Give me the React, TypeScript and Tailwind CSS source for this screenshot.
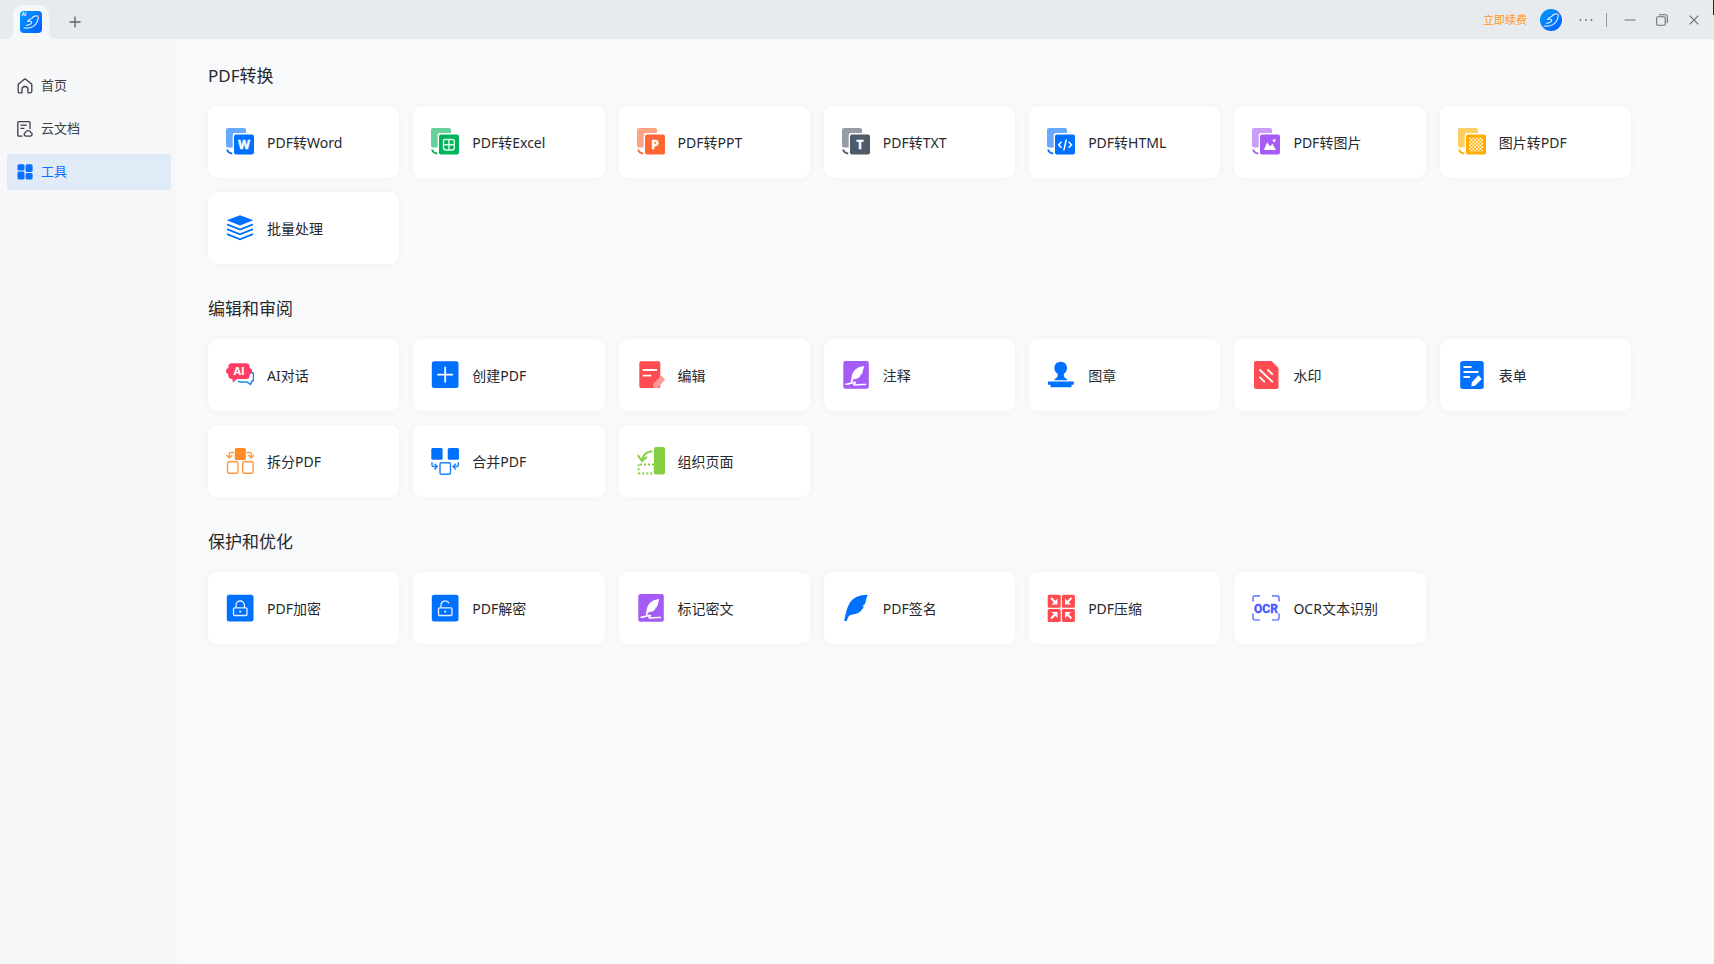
import type { ReactNode } from 'react';

interface Tool {
  label: string;
  icon: ReactNode;
}

interface Section {
  title: string;
  tools: Tool[];
}

const Icon = ({ children }: { children: ReactNode }) => (
  <svg
    className="h-7 w-7 shrink-0"
    viewBox="0 0 28 28"
    fill="none"
    aria-hidden="true"
  >
    {children}
  </svg>
);

// Two overlapping sheets, used by every conversion tool
const ConvertIcon = ({
  front,
  back,
  children,
}: {
  front: string;
  back: string;
  children: ReactNode;
}) => (
  <Icon>
    <path
      d="M2 0H18Q20 0 20 2V5H9Q6.7 5 6.7 7.3V19.5H2Q0 19.5 0 17.5V2Q0 0 2 0Z"
      fill={back}
    />
    <rect x="8" y="6.5" width="20" height="20" rx="2" fill={front} />
    <path d="M1.2 21.5q.4 3.4 5 4" stroke={front} strokeWidth="2" />
    {children}
  </Icon>
);

const Letter = ({ children }: { children: string }) => (
  <text
    x="18"
    y="21"
    textAnchor="middle"
    fill="#fff"
    stroke="#fff"
    strokeWidth=".5"
    className="font-['Open_Sans',sans-serif] text-[12px] font-bold"
  >
    {children}
  </text>
);

const BirdMark = () => (
  <>
    <path
      d="M4 17C10 17.6 15 15.5 17 11.3 17.9 9.3 18.3 7.3 18.6 5.2 15.6 4.500 12.900 5.300 11.800 7.400M11.800 7.400C10 8.600 8.200 8.800 7.600 10.400M7.600 10.400c3-.8 5 .1 3.700 2S8.300 14 6.300 14.300"
      stroke="#d9ecff"
      strokeWidth="1.1"
      strokeLinecap="round"
      strokeLinejoin="round"
      fill="none"
    />
    <circle cx="18.7" cy="5" r=".8" fill="#ff4466" />
  </>
);

const QuillSheet = () => (
  <Icon>
    <rect x="1.3" y="0" width="25.5" height="27.7" rx="2" fill="#a55bf5" />
    <path
      d="M22.5 5C17 5.3 12.500 8 10.500 12.500 9.500 15 9.300 18 8.700 21.500l1.500-.2c.6-2 1-2.800 2-3.200 3.300-.4 5.500-1.600 6.600-3.600l-1-.3 2.200-1.200c1-2.400 1.300-5.600 2.500-8.200Z"
      fill="#fff"
    />
    <path
      d="M4 23.2c4-.2 7.500-2.200 9-1.900s-1.800 1.700-1 2.500c1.400.9 6-.8 11.500-.3"
      stroke="#fff"
      strokeWidth="1.5"
      strokeLinecap="round"
    />
  </Icon>
);

const LockSheet = ({ open = false }: { open?: boolean }) => (
  <Icon>
    <rect x=".8" y=".8" width="26.7" height="26.7" rx="2.5" fill="#0070ff" />
    <rect
      x="7.5"
      y="13.8"
      width="13.5"
      height="7.7"
      rx="1"
      stroke="#e3f0ff"
      strokeWidth="1.3"
    />
    <path
      d={
        open
          ? 'M10 13.8V11.2a4.2 4.2 0 0 1 8-1.8'
          : 'M10 13.8V11.2a4.2 4.2 0 0 1 8.4 0v2.6'
      }
      stroke="#e3f0ff"
      strokeWidth="1.3"
    />
    <circle cx="14.2" cy="17.6" r="1.1" fill="#e3f0ff" />
  </Icon>
);

const SECTIONS: Section[] = [
  {
    title: 'PDF转换',
    tools: [
      {
        label: 'PDF转Word',
        icon: (
          <ConvertIcon front="#0070ff" back="#66a9ff">
            <Letter>W</Letter>
          </ConvertIcon>
        ),
      },
      {
        label: 'PDF转Excel',
        icon: (
          <ConvertIcon front="#00b459" back="#66d29b">
            <path
              d="M13.5 11.5H21.3Q23.3 11.5 23.3 13.5V19.5Q23.3 22 21 22H15Q12.5 22 12.5 19.5V12.5Q12.5 11.5 13.5 11.5ZM12.5 16.8H23.3M17.9 11.5V22"
              stroke="#dffbeb"
              strokeWidth="1.4"
            />
          </ConvertIcon>
        ),
      },
      {
        label: 'PDF转PPT',
        icon: (
          <ConvertIcon front="#ff6633" back="#ffa385">
            <Letter>P</Letter>
          </ConvertIcon>
        ),
      },
      {
        label: 'PDF转TXT',
        icon: (
          <ConvertIcon front="#505a69" back="#969ca5">
            <Letter>T</Letter>
          </ConvertIcon>
        ),
      },
      {
        label: 'PDF转HTML',
        icon: (
          <ConvertIcon front="#0070ff" back="#66a9ff">
            <path
              d="M14.5 13.8 11.7 16.8l2.8 3M21.7 13.8l2.8 3-2.8 3M19.3 11.5l-2.5 10.8"
              stroke="#fff"
              strokeWidth="1.5"
            />
          </ConvertIcon>
        ),
      },
      {
        label: 'PDF转图片',
        icon: (
          <ConvertIcon front="#a55bf5" back="#c99df9">
            <path d="M11.8 22 15.2 14.2 18 18.5l2.4-2.7L24 22Z" fill="#fff" />
            <circle cx="22.2" cy="12.6" r="1.4" fill="#fff" />
          </ConvertIcon>
        ),
      },
      {
        label: '图片转PDF',
        icon: (
          <ConvertIcon front="#ffab00" back="#ffcd66">
            <defs>
              <pattern
                id="checker"
                x="11"
                y="9.5"
                width="3.5"
                height="3.5"
                patternUnits="userSpaceOnUse"
              >
                <path
                  d="M0 0h1.8v1.8H0zM1.75 1.75h1.8v1.8h-1.8z"
                  fill="#fff3d6"
                />
              </pattern>
            </defs>
            <rect x="11" y="9.5" width="14" height="14" fill="url(#checker)" />
          </ConvertIcon>
        ),
      },
      {
        label: '批量处理',
        icon: (
          <Icon>
            <path d="M14 1.2 27.3 6.3 14 11.5.8 6.3Z" fill="#0070ff" />
            <path
              d="M1 10.3l13 5.2 13-5.2M1 15.2l13 5.2 13-5.2M1 20.1l13 5.2 13-5.2"
              stroke="#0070ff"
              strokeWidth="1.8"
            />
          </Icon>
        ),
      },
    ],
  },
  {
    title: '编辑和审阅',
    tools: [
      {
        label: 'AI对话',
        icon: (
          <Icon>
            <path
              d="M25.5 11.5q2 .3 2 2.2v4.5q0 2-1.7 2.1l-1.3 3-3.7-2.4H14.5q-2 0-2-1.4"
              stroke="#1a86f5"
              strokeWidth="1.5"
            />
            <path
              d="M6 2.3H20Q23.7 2.3 23.7 6V7.2Q26.3 7.5 26.3 10.2T23.7 13.2V14.5Q23.7 18 20 18H11L7 21.7 6.3 18Q2.3 18 2.3 14.5V13.2Q0 13 0 10.2T2.3 7.2V6Q2.3 2.3 6 2.3Z"
              fill="#ff3d64"
            />
            <text
              x="13"
              y="14"
              textAnchor="middle"
              fill="#fff"
              className="font-['Open_Sans',sans-serif] text-[11px] font-bold"
            >
              AI
            </text>
          </Icon>
        ),
      },
      {
        label: '创建PDF',
        icon: (
          <Icon>
            <rect x=".8" y=".3" width="26.7" height="26.7" rx="2.5" fill="#0070ff" />
            <path
              d="M14.2 6.5v14.3M7 13.7h14.3"
              stroke="#fff"
              strokeWidth="1.8"
              strokeLinecap="round"
            />
          </Icon>
        ),
      },
      {
        label: '编辑',
        icon: (
          <Icon>
            <rect x="2.3" y=".3" width="21" height="26.7" rx="1.8" fill="#ff4c50" />
            <path d="M5.7 9h14.3M5.7 14.7h8.6" stroke="#fff" strokeWidth="1.8" />
            <path
              d="M23.5 15.3q.8-.8 1.6 0l2.4 2.4q.8.8 0 1.600L20.500 27h-4l-.2-4Z"
              fill="#ff999a"
            />
          </Icon>
        ),
      },
      { label: '注释', icon: <QuillSheet /> },
      {
        label: '图章',
        icon: (
          <Icon>
            <path
              d="M13.7.7C17.5.7 20 3.6 20 7c0 2.7-1.3 4.6-3.2 6 0 3 .7 4.2 3.2 5v1.3H7.5V18c2.5-.8 3.2-2 3.2-5C8.8 11.6 7.4 9.7 7.4 7c0-3.4 2.5-6.3 6.3-6.3Z"
              fill="#0070ff"
            />
            <path d="M1 20.5h25.8v3.2H24.5v2.6H3.5v-2.6H1Z" fill="#0070ff" />
          </Icon>
        ),
      },
      {
        label: '水印',
        icon: (
          <Icon>
            <path
              d="M4 0H19.500L26.500 7V25.500Q26.500 28 24 28H4Q2 28 2 25.500V2Q2 0 4 0Z"
              fill="#ff4c50"
            />
            <path
              d="m7.5 8.5 13.3 12.7M15.5 8.5l5.3 5.2M7.5 15.8l5.3 5.4"
              stroke="#fff"
              strokeWidth="1.8"
            />
          </Icon>
        ),
      },
      {
        label: '表单',
        icon: (
          <Icon>
            <rect x="2.2" y="0" width="23.5" height="28" rx="2.5" fill="#0070ff" />
            <path
              d="M5.5 6h8M5.5 11h15M5.5 16h6.5"
              stroke="#fff"
              strokeWidth="1.8"
            />
            <path d="m20.3 14.3 3.5 3.7-6.5 6.5-4 1 .7-4.3Z" fill="#fff" />
          </Icon>
        ),
      },
      {
        label: '拆分PDF',
        icon: (
          <Icon>
            <rect x="8.8" y="1" width="11" height="12" rx="1.5" fill="#ff8c26" />
            <g stroke="#ff9a40" strokeWidth="1.4">
              <rect x="1.5" y="14.8" width="10.5" height="11.5" rx="1.5" />
              <rect x="16.7" y="14.8" width="10.5" height="11.5" rx="1.5" />
              <path d="M8 5.5H4.5Q3.3 5.5 3.3 7v4M.5 8l2.800 3 3-3M20.500 5.500H24q1.200 0 1.200 1.500v4M22.300 8l2.900 3 2.700-3" />
            </g>
          </Icon>
        ),
      },
      {
        label: '合并PDF',
        icon: (
          <Icon>
            <rect x=".3" y="1" width="11.3" height="11.8" rx="1.5" fill="#0070ff" />
            <rect x="16.7" y="1" width="11.3" height="11.8" rx="1.5" fill="#0070ff" />
            <g stroke="#1a80ff" strokeWidth="1.4">
              <rect x="9" y="15.8" width="10.5" height="11.5" rx="1.5" />
              <path d="M1 15v3q0 1.5 1.5 1.5H6M3.5 16.8l2.7 2.7-2.7 2.9M27.3 15v3q0 1.5-1.5 1.5H22.3M24.8 16.8l-2.7 2.7 2.7 2.9" />
            </g>
          </Icon>
        ),
      },
      {
        label: '组织页面',
        icon: (
          <Icon>
            <rect x="17" y="0" width="11" height="27.5" rx="1.8" fill="#85cf44" />
            <path
              d="M15.3 4.2C9.5 4.7 5.7 7.5 5 13.5M.8 8.2 5 14l5-4.3"
              stroke="#85cf44"
              strokeWidth="2"
            />
            <rect
              x="1.5"
              y="17.5"
              width="16"
              height="9"
              rx="1.5"
              stroke="#85cf44"
              strokeWidth="2"
              strokeDasharray="2 2"
            />
          </Icon>
        ),
      },
    ],
  },
  {
    title: '保护和优化',
    tools: [
      { label: 'PDF加密', icon: <LockSheet /> },
      { label: 'PDF解密', icon: <LockSheet open /> },
      { label: '标记密文', icon: <QuillSheet /> },
      {
        label: 'PDF签名',
        icon: (
          <Icon>
            <path
              d="M25.8.8C17 .8 10.500 4 7.500 9.500 5 14 4 18 2.300 26.500q1.300 1 2.600.2C6 23 6.800 21.200 9 20.700c4.500-.4 8-1.300 10.300-4.200 1.300-1.600 2.200-3 2.500-4.500l-1.600-.8c1.300-.2 2.200-.7 3-1.700.8-3 1.200-6 2.600-8.700Z"
              fill="#0070ff"
            />
          </Icon>
        ),
      },
      {
        label: 'PDF压缩',
        icon: (
          <Icon>
            <g fill="#ff4c50">
              <rect x=".7" y=".8" width="13" height="13" rx="1.5" />
              <rect x="14.9" y=".8" width="13" height="13" rx="1.5" />
              <rect x=".7" y="15" width="13" height="13" rx="1.5" />
              <rect x="14.9" y="15" width="13" height="13" rx="1.5" />
            </g>
            <path
              d="M4 4l4 4M24.5 4l-4 4M4 24.500l4-4M24.500 24.500l-4-4"
              stroke="#fff"
              strokeWidth="2"
            />
            <path
              d="M10.5 4.5v6h-6ZM18 4.5v6h6ZM10.5 24v-6h-6ZM18 24v-6h6Z"
              fill="#fff"
            />
          </Icon>
        ),
      },
      {
        label: 'OCR文本识别',
        icon: (
          <Icon>
            <path
              d="M1 7.5V4Q1 1.8 3.2 1.8H8M20 1.8h4.8Q27 1.8 27 4v3.5M27 19.5v4.3Q27 26 24.8 26H20M8 26H3.2Q1 26 1 23.8v-4.3"
              stroke="#7485ff"
              strokeWidth="1.7"
            />
            <text
              x="14"
              y="18.5"
              textAnchor="middle"
              fill="#4a58ff"
              stroke="#4a58ff"
              strokeWidth=".4"
              className="font-[Roboto,sans-serif] text-[12px] font-bold"
            >
              OCR
            </text>
          </Icon>
        ),
      },
    ],
  },
];

const TitleBar = () => (
  <header className="flex h-[39px] items-center justify-between bg-[#e8ebee]">
    <div className="flex h-full items-end">
      {/* Active tab with flared feet */}
      <svg className="ml-2 h-2 w-[5px]" viewBox="0 0 5 8" aria-hidden="true">
        <path d="M5 0v8H0Q5 7 5 0Z" fill="#f5f7f9" />
      </svg>
      <button
        aria-label="PDF"
        className="flex h-[34px] w-9 items-center justify-center rounded-t-[10px] bg-[#f5f7f9]"
      >
        <svg className="h-[22px] w-[22px]" viewBox="0 0 22 22" aria-hidden="true">
          <defs>
            <linearGradient id="logo" x1="0" y1="0" x2="1" y2="1">
              <stop offset="0" stopColor="#009dff" />
              <stop offset="1" stopColor="#005bff" />
            </linearGradient>
          </defs>
          <rect width="22" height="22" rx="4" fill="url(#logo)" />
          <text
            x="1.5"
            y="5"
            fill="#e6f5ff"
            className="font-[Roboto,sans-serif] text-[5px] font-bold"
          >
            AI
          </text>
          <BirdMark />
        </svg>
      </button>
      <svg className="h-2 w-[5px]" viewBox="0 0 5 8" aria-hidden="true">
        <path d="M0 0v8h5Q0 7 0 0Z" fill="#f5f7f9" />
      </svg>
      <button
        aria-label="新建标签页"
        className="ml-[9px] flex h-[34px] w-6 items-center justify-center text-[#5d6067]"
      >
        <svg className="h-3 w-3" viewBox="0 0 12 12" aria-hidden="true">
          <path d="M6 .5v11M.5 6h11" stroke="currentColor" strokeWidth="1.3" />
        </svg>
      </button>
    </div>

    <div className="flex items-center pr-[14px] text-[#6b6e75]">
      <a href="#renew" className="text-[11px] leading-4 text-[#ff9420]">
        立即续费
      </a>
      <button aria-label="账户" className="ml-[13px]">
        <svg className="h-[22px] w-[22px]" viewBox="0 0 22 22" aria-hidden="true">
          <circle cx="11" cy="11" r="11" fill="url(#logo)" />
          <BirdMark />
        </svg>
      </button>
      <button aria-label="更多" className="ml-[17px]">
        <svg className="h-4 w-[14px]" viewBox="0 0 14 16" aria-hidden="true">
          <g fill="currentColor">
            <circle cx="1.5" cy="8" r=".9" />
            <circle cx="7" cy="8" r=".9" />
            <circle cx="12.5" cy="8" r=".9" />
          </g>
        </svg>
      </button>
      <span className="ml-[13px] h-[14px] w-px bg-[#94979c]" />
      <button aria-label="最小化" className="ml-[17px]">
        <svg className="h-3 w-3" viewBox="0 0 12 12" aria-hidden="true">
          <path d="M.5 6h11" stroke="currentColor" strokeWidth="1" />
        </svg>
      </button>
      <button aria-label="还原" className="ml-5">
        <svg className="h-3 w-3" viewBox="0 0 12 12" fill="none" aria-hidden="true">
          <rect
            x=".7"
            y="2.7"
            width="8.5"
            height="8.5"
            rx="1.2"
            stroke="currentColor"
            strokeWidth="1.1"
          />
          <path
            d="M3 .8H9.5Q11.3.8 11.3 2.6V9"
            stroke="currentColor"
            strokeWidth="1.1"
          />
        </svg>
      </button>
      <button aria-label="关闭" className="ml-5">
        <svg className="h-3 w-3" viewBox="0 0 12 12" aria-hidden="true">
          <path
            d="m1.7 1.7 8.6 8.6M10.3 1.7 1.7 10.3"
            stroke="currentColor"
            strokeWidth="1.2"
          />
        </svg>
      </button>
    </div>
  </header>
);

const NAV_ITEMS = [
  {
    label: '首页',
    active: false,
    icon: (
      <path
        d="M1.2 6.3 7 1.4q1-.8 2 0l5.8 4.900v7q0 1.500-1.500 1.500H11V11.500a3 3 0 0 0-6 0v3.300H2.700q-1.500 0-1.500-1.500Z"
        stroke="currentColor"
        strokeWidth="1.3"
        strokeLinejoin="round"
      />
    ),
  },
  {
    label: '云文档',
    active: false,
    icon: (
      <path
        d="M13 8V2q0-1.3-1.3-1.3H2Q.8.7.8 2v12q0 1.2 1.2 1.2h3.5M3.5 4.2h6.3M3.5 7.3h3.8M8.8 15.2a2 2 0 0 1-.2-3.900 2.800 2.800 0 0 1 5.100 0 2 2 0 0 1-.2 3.900Z"
        stroke="currentColor"
        strokeWidth="1.3"
      />
    ),
  },
  {
    label: '工具',
    active: true,
    icon: (
      <g fill="currentColor">
        <rect x=".5" y=".3" width="7" height="6.2" rx="1.5" />
        <rect x="8.6" y=".3" width="7" height="7.7" rx="1.5" />
        <rect x=".5" y="7.6" width="7" height="8" rx="1.5" />
        <rect x="8.6" y="9.1" width="7" height="6.5" rx="1.5" />
      </g>
    ),
  },
];

const Sidebar = () => (
  <nav className="flex w-[178px] shrink-0 flex-col gap-[7px] bg-[#f5f7f9] px-[7px] pt-[29px]">
    {NAV_ITEMS.map((item) => (
      <a
        key={item.label}
        href="#"
        aria-current={item.active ? 'page' : undefined}
        className={`flex h-9 items-center gap-2 rounded-[3px] pl-[10px] text-[13px] ${
          item.active ? 'bg-[#e1ebf8] text-[#0a70ff]' : 'text-[#3c3e42]'
        }`}
      >
        <svg className="h-4 w-4" viewBox="0 0 16 16" fill="none" aria-hidden="true">
          {item.icon}
        </svg>
        {item.label}
      </a>
    ))}
  </nav>
);

const ToolCard = ({ label, icon }: Tool) => (
  <button className="flex h-[72px] items-center gap-[13px] rounded-[9px] bg-white px-[18px] text-left text-[14px] text-[#26282c] shadow-[0_0_8px_rgba(0,0,0,0.03)]">
    {icon}
    <span className="whitespace-nowrap">{label}</span>
  </button>
);

export default function App() {
  return (
    <div className="relative flex min-h-screen flex-col overflow-hidden bg-[#f7f9fb] font-['Noto_Sans','Noto_Sans_CJK_SC',sans-serif]">
      <TitleBar />
      <div className="flex flex-1">
        <Sidebar />
        <main className="flex flex-1 flex-col gap-[33px] pt-[25px] pr-[83px] pb-8 pl-[30px]">
          {SECTIONS.map((section) => (
            <section key={section.title}>
              <h2 className="mb-[18px] text-[17px] leading-6 text-[#26282c]">
                {section.title}
              </h2>
              <div className="grid grid-cols-[repeat(auto-fill,minmax(190px,1fr))] gap-[14px]">
                {section.tools.map((tool) => (
                  <ToolCard key={tool.label} {...tool} />
                ))}
              </div>
            </section>
          ))}
        </main>
      </div>
      {/* Edge of the window behind */}
      <span className="absolute top-0 right-0 h-[15px] w-px bg-[#26282c]" />
    </div>
  );
}
